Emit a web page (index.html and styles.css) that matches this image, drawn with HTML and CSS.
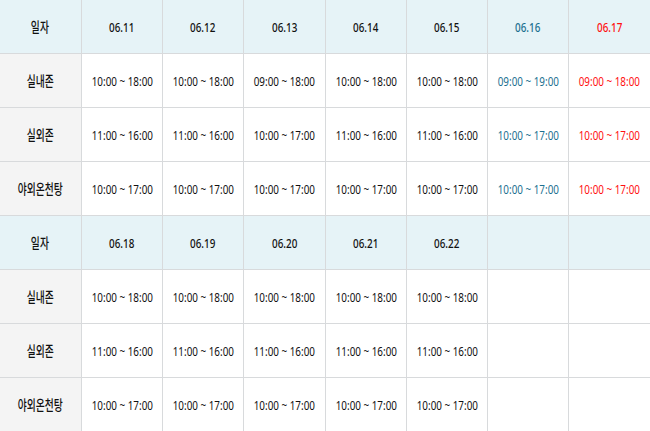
FILE: index.html
```html
<!DOCTYPE html>
<html lang="ko">
<head>
<meta charset="utf-8">
<link rel="stylesheet" href="styles.css">
</head>
<body>
<table class="schedule">
  <tbody>
    <tr class="head">
      <th class="label"><span class="t">일자</span></th>
      <th><span class="t">06.11</span></th>
      <th><span class="t">06.12</span></th>
      <th><span class="t">06.13</span></th>
      <th><span class="t">06.14</span></th>
      <th><span class="t">06.15</span></th>
      <th class="sat"><span class="t">06.16</span></th>
      <th class="sun"><span class="t">06.17</span></th>
    </tr>
    <tr>
      <th class="label"><span class="t">실내존</span></th>
      <td><span class="t">10:00 ~ 18:00</span></td>
      <td><span class="t">10:00 ~ 18:00</span></td>
      <td><span class="t">09:00 ~ 18:00</span></td>
      <td><span class="t">10:00 ~ 18:00</span></td>
      <td><span class="t">10:00 ~ 18:00</span></td>
      <td class="sat"><span class="t">09:00 ~ 19:00</span></td>
      <td class="sun"><span class="t">09:00 ~ 18:00</span></td>
    </tr>
    <tr>
      <th class="label"><span class="t">실외존</span></th>
      <td><span class="t">11:00 ~ 16:00</span></td>
      <td><span class="t">11:00 ~ 16:00</span></td>
      <td><span class="t">10:00 ~ 17:00</span></td>
      <td><span class="t">11:00 ~ 16:00</span></td>
      <td><span class="t">11:00 ~ 16:00</span></td>
      <td class="sat"><span class="t">10:00 ~ 17:00</span></td>
      <td class="sun"><span class="t">10:00 ~ 17:00</span></td>
    </tr>
    <tr>
      <th class="label"><span class="t">야외온천탕</span></th>
      <td><span class="t">10:00 ~ 17:00</span></td>
      <td><span class="t">10:00 ~ 17:00</span></td>
      <td><span class="t">10:00 ~ 17:00</span></td>
      <td><span class="t">10:00 ~ 17:00</span></td>
      <td><span class="t">10:00 ~ 17:00</span></td>
      <td class="sat"><span class="t">10:00 ~ 17:00</span></td>
      <td class="sun"><span class="t">10:00 ~ 17:00</span></td>
    </tr>
    <tr class="head">
      <th class="label"><span class="t">일자</span></th>
      <th><span class="t">06.18</span></th>
      <th><span class="t">06.19</span></th>
      <th><span class="t">06.20</span></th>
      <th><span class="t">06.21</span></th>
      <th><span class="t">06.22</span></th>
      <th></th>
      <th></th>
    </tr>
    <tr>
      <th class="label"><span class="t">실내존</span></th>
      <td><span class="t">10:00 ~ 18:00</span></td>
      <td><span class="t">10:00 ~ 18:00</span></td>
      <td><span class="t">10:00 ~ 18:00</span></td>
      <td><span class="t">10:00 ~ 18:00</span></td>
      <td><span class="t">10:00 ~ 18:00</span></td>
      <td></td>
      <td></td>
    </tr>
    <tr>
      <th class="label"><span class="t">실외존</span></th>
      <td><span class="t">11:00 ~ 16:00</span></td>
      <td><span class="t">11:00 ~ 16:00</span></td>
      <td><span class="t">11:00 ~ 16:00</span></td>
      <td><span class="t">11:00 ~ 16:00</span></td>
      <td><span class="t">11:00 ~ 16:00</span></td>
      <td></td>
      <td></td>
    </tr>
    <tr>
      <th class="label"><span class="t">야외온천탕</span></th>
      <td><span class="t">10:00 ~ 17:00</span></td>
      <td><span class="t">10:00 ~ 17:00</span></td>
      <td><span class="t">10:00 ~ 17:00</span></td>
      <td><span class="t">10:00 ~ 17:00</span></td>
      <td><span class="t">10:00 ~ 17:00</span></td>
      <td></td>
      <td></td>
    </tr>
  </tbody>
</table>
</body>
</html>
```

FILE: styles.css
```css
html, body {
  margin: 0;
  padding: 0;
  background: #ffffff;
}

body {
  font-family: "Noto Sans", "Noto Sans CJK KR", sans-serif;
  font-size: 13px;
  color: #111111;
  overflow: hidden;
}

.schedule {
  width: 650px;
  table-layout: fixed;
  border-collapse: collapse;
  border: hidden;
}

.schedule th,
.schedule td {
  height: 53px;
  padding: 0;
  border: 1px solid #d8dadc;
  text-align: center;
  vertical-align: middle;
  font-weight: normal;
  background: #ffffff;
}

.schedule .head th {
  background: #e6f3f7;
}

.schedule th.label {
  background: #f4f4f4;
}

.schedule .head th.label {
  background: #e6f3f7;
}

.t {
  display: inline-block;
  white-space: nowrap;
  transform: scaleX(0.76);
  line-height: 16px;
}

.schedule .head .t {
  font-weight: 500;
  color: inherit;
}

.schedule th.label .t {
  font-family: "Noto Sans CJK KR", sans-serif;
  font-size: 14px;
  font-weight: 500;
  transform: scaleX(0.7);
}

.sat {
  color: #1c7090;
}

.sun {
  color: #ff1010;
}
```
